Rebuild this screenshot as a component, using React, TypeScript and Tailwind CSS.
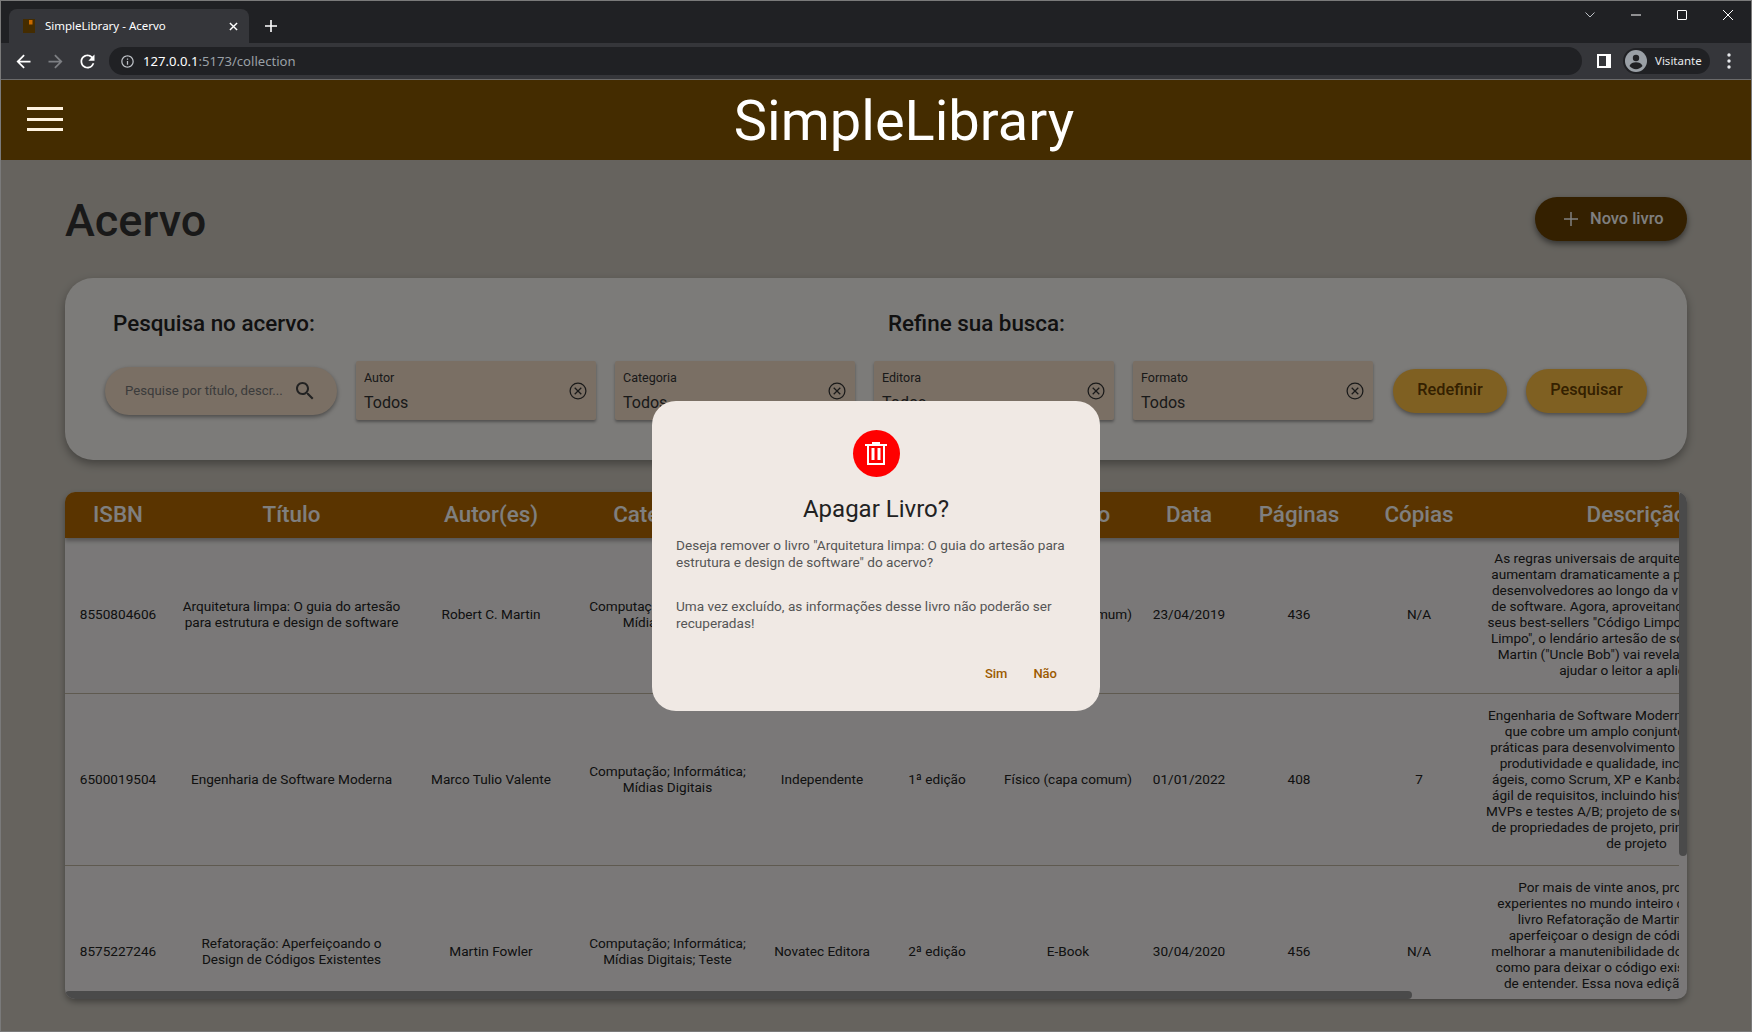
import React from "react";

const font = "[font-family:Roboto,'Liberation_Sans',sans-serif]";

function Clear() {
  return (
    <svg viewBox="0 0 18 18" className="w-[18px] h-[18px] fill-none stroke-[#333] stroke-[1.25] shrink-0">
      <circle cx="9" cy="9" r="7.900" />
      <path d="M5.700 5.700l6.600 6.600M12.300 5.700l-6.600 6.600" />
    </svg>
  );
}

function Field({ label }: { label: string }) {
  return (
    <div className="w-[240px] h-[59px] bg-[#f4dec8] rounded-[2px] shadow-[0_2px_3px_rgba(0,0,0,0.35)] flex items-center justify-between pl-2 pr-[9px] shrink-0">
      <div className="flex flex-col pt-[3px]">
        <span className="text-[12.5px] leading-[14px] text-[#333]">{label}</span>
        <span className="text-[16px] leading-[20px] mt-[8px] text-[#333]">Todos</span>
      </div>
      <Clear />
    </div>
  );
}

function Pill({ text, w }: { text: string; w: string }) {
  return (
    <button className={`${w} h-[44px] rounded-[22px] bg-[#ffc044] text-[#684000] text-[16.3px] font-medium shadow-[0_2px_4px_rgba(0,0,0,0.4)] shrink-0`}>
      {text}
    </button>
  );
}

const heads = ["ISBN", "Título", "Autor(es)", "Categorias", "Editora", "Edição", "Formato", "Data", "Páginas", "Cópias", "Descrição", "Ações"];
const widths = ["w-[106px]", "w-[241px]", "w-[158px]", "w-[195px]", "w-[114px]", "w-[116px]", "w-[146px]", "w-[96px]", "w-[124px]", "w-[116px]", "w-[319px]", "w-[205px]"];

type Row = { h: string; pb: string; c: React.ReactNode[]; d: string[] };
const rows: Row[] = [
  {
    h: "h-[155px]",
    pb: "pb-[2px]",
    c: ["8550804606", "Arquitetura limpa: O guia do artesão para estrutura e design de software", "Robert C. Martin", "Computação; Informática; Mídias Digitais", "Alta Books", "1ª edição", "Físico (capa comum)", "23/04/2019", "436", "N/A"],
    d: [
      "As regras universais de arquitetura de software",
      "aumentam dramaticamente a produtividade dos",
      "desenvolvedores ao longo da vida dos sistemas",
      "de software. Agora, aproveitando o sucesso dos",
      "seus best-sellers \"Código Limpo\" e \"O Codificador",
      "Limpo\", o lendário artesão de software Robert C.",
      "Martin (\"Uncle Bob\") vai revelar essas regras e",
      "ajudar o leitor a aplicá-las",
    ],
  },
  {
    h: "h-[172px]",
    pb: "pb-0",
    c: ["6500019504", "Engenharia de Software Moderna", "Marco Tulio Valente", "Computação; Informática; Mídias Digitais", "Independente", "1ª edição", "Físico (capa comum)", "01/01/2022", "408", "7"],
    d: [
      "Engenharia de Software Moderna é um livro texto",
      "que cobre um amplo conjunto de técnicas e",
      "práticas para desenvolvimento de software, com",
      "produtividade e qualidade, incluindo métodos",
      "ágeis, como Scrum, XP e Kanban; especificação",
      "ágil de requisitos, incluindo histórias de usuário,",
      "MVPs e testes A/B; projeto de software, com foco",
      "de propriedades de projeto, princípios e padrões",
      "de projeto",
    ],
  },
  {
    h: "h-[174px]",
    pb: "pb-[2px]",
    c: ["8575227246", "Refatoração: Aperfeiçoando o Design de Códigos Existentes", "Martin Fowler", "Computação; Informática; Mídias Digitais; Teste", "Novatec Editora", "2ª edição", "E-Book", "30/04/2020", "456", "N/A"],
    d: [
      "Por mais de vinte anos, programadores",
      "experientes no mundo inteiro contaram com o",
      "livro Refatoração de Martin Fowler para",
      "aperfeiçoar o design de código existente e",
      "melhorar a manutenibilidade do software, assim",
      "como para deixar o código existente mais fácil",
      "de entender. Essa nova edição, amplamente",
      "atualizada, explica a refatoração",
      "de maneira prática",
    ],
  },
];

function BrowserChrome() {
  return (
    <div className="shrink-0 h-[79px] flex flex-col [font-family:'Noto_Sans',sans-serif]">
      <div className="h-[42px] bg-[#202124] flex items-end pl-[8px] relative">
        <div className="w-[240px] h-[34px] bg-[#35363a] rounded-t-[8px] flex items-center pl-[14px] pr-[11px]">
          <svg viewBox="0 0 12 14" className="w-[12px] h-[14px] shrink-0">
            <rect width="12" height="14" fill="#442c00" />
            <rect x="6" y="1" width="3.500" height="4.500" fill="#c86a00" />
          </svg>
          <span className="ml-[10px] text-[11.5px] text-white flex-1 whitespace-nowrap">SimpleLibrary - Acervo</span>
          <svg viewBox="0 0 10 10" className="w-[9px] h-[9px] stroke-white stroke-[1.6]">
            <path d="M1 1l8 8M9 1l-8 8" />
          </svg>
        </div>
        <svg viewBox="0 0 12 12" className="w-[12px] h-[12px] stroke-white stroke-[1.6] ml-[16px] mb-[11px]">
          <path d="M6 0v12M0 6h12" />
        </svg>
        <div className="flex-1" />
        <div className="flex items-center gap-[36px] self-start mt-[9px] pr-[18px]">
          <svg viewBox="0 0 10 6" className="w-[10px] h-[6px] fill-none stroke-[#bdc1c6] stroke-1">
            <path d="M0.500 0.500L5 5l4.500-4.500" />
          </svg>
          <svg viewBox="0 0 10 10" className="w-[10px] h-[10px] stroke-white stroke-1">
            <path d="M0 5h10" />
          </svg>
          <div className="w-[10px] h-[10px] border border-white rounded-[1px]" />
          <svg viewBox="0 0 10 10" className="w-[10px] h-[10px] stroke-white stroke-1">
            <path d="M0 0l10 10M10 0L0 10" />
          </svg>
        </div>
      </div>
      <div className="flex-1 bg-[#35363a] flex items-center pl-[12px] pr-[17px] border-b border-[#6a6a6a]">
        <svg viewBox="0 0 24 24" className="w-[21px] h-[21px] fill-white shrink-0">
          <path d="M20 11H7.830l5.590-5.590L12 4l-8 8 8 8 1.410-1.410L7.830 13H20v-2z" />
        </svg>
        <svg viewBox="0 0 24 24" className="w-[21px] h-[21px] fill-[#7d7f83] shrink-0 ml-[11px]">
          <path d="M12 4l-1.410 1.410L16.170 11H4v2h12.170l-5.580 5.590L12 20l8-8z" />
        </svg>
        <svg viewBox="0 0 24 24" className="w-[21px] h-[21px] fill-white shrink-0 ml-[11px]">
          <path d="M17.650 6.350A7.958 7.958 0 0 0 12 4c-4.420 0-7.990 3.580-7.990 8s3.570 8 7.990 8c3.730 0 6.840-2.550 7.730-6h-2.080A5.990 5.990 0 0 1 12 18c-3.310 0-6-2.690-6-6s2.690-6 6-6c1.660 0 3.140.69 4.220 1.780L13 11h7V4l-2.350 2.350z" />
        </svg>
        <div className="ml-[11px] w-[1473px] h-[28px] rounded-full bg-[#202124] flex items-center pl-[11px] shrink-0">
          <svg viewBox="0 0 24 24" className="w-[15px] h-[15px] fill-[#bdc1c6] shrink-0">
            <path d="M11 7h2v2h-2zm0 4h2v6h-2zm1-9C6.480 2 2 6.480 2 12s4.480 10 10 10 10-4.480 10-10S17.520 2 12 2zm0 18c-4.410 0-8-3.590-8-8s3.590-8 8-8 8 3.590 8 8-3.590 8-8 8z" />
          </svg>
          <span className="ml-[8px] pt-[1px] text-[13.1px] text-white whitespace-nowrap">
            127.0.0.1<span className="text-[#9aa0a6]">:5173/collection</span>
          </span>
        </div>
        <div className="ml-[15px] w-[14px] h-[14px] bg-white flex items-center pl-[2px] shrink-0">
          <div className="w-[7px] h-[10px] bg-[#35363a]" />
        </div>
        <div className="ml-[12px] w-[87px] h-[26px] rounded-full bg-[#202124] flex items-center pl-[2px] shrink-0">
          <svg viewBox="0 0 22 22" className="w-[22px] h-[22px] shrink-0">
            <circle cx="11" cy="11" r="11" fill="#9aa0a6" />
            <circle cx="11" cy="8" r="3.200" fill="#202124" />
            <path d="M4.500 16c1-2.800 3.600-3.800 6.500-3.800s5.500 1 6.500 3.800c-1.600 2-4 3.200-6.500 3.200s-4.900-1.200-6.500-3.200z" fill="#202124" />
          </svg>
          <span className="ml-[8px] text-[11.5px] text-[#e8eaed] whitespace-nowrap">Visitante</span>
        </div>
        <svg viewBox="0 0 4 16" className="ml-[17px] w-[4px] h-[16px] fill-[#e8eaed] shrink-0">
          <circle cx="2" cy="2" r="1.700" />
          <circle cx="2" cy="8" r="1.700" />
          <circle cx="2" cy="14" r="1.700" />
        </svg>
      </div>
    </div>
  );
}

export default function App() {
  return (
    <div className={`w-[1752px] h-[1032px] overflow-hidden flex flex-col bg-[#ccc7bd] border border-[#7a7a7a] ${font} relative`}>
      <div className="relative z-20 shrink-0">
        <BrowserChrome />
        <header className="h-[80px] bg-[#442c00] flex items-center justify-center relative pl-[56px] pt-[2px]">
          <div className="absolute left-[26px] top-[27px] w-[36px] h-[24px] flex flex-col justify-between">
            <div className="h-[3px] bg-[#fff3e0]" />
            <div className="h-[3px] bg-[#fff3e0]" />
            <div className="h-[3px] bg-[#fff3e0]" />
          </div>
          <h1 className="text-[56px] leading-[66px] text-white">SimpleLibrary</h1>
        </header>
      </div>

      <main className="flex-1 min-h-0 pl-[64px] pr-[64px] pt-[37px] flex flex-col">
        <div className="flex items-center justify-between h-[44px]">
          <h2 className="text-[45px] leading-[52px] font-medium text-[#333] mt-[3px]">Acervo</h2>
          <button className="w-[152px] h-[44px] rounded-[22px] bg-[#684000] text-white font-medium text-[16.4px] flex items-center pl-[29px] shadow-[0_3px_6px_rgba(0,0,0,0.5)]">
            <svg viewBox="0 0 14 14" className="w-[14px] h-[14px] stroke-white stroke-[1.5] mr-[12px]">
              <path d="M7 0v14M0 7h14" />
            </svg>
            Novo livro
          </button>
        </div>

        <section className="mt-[37px] h-[182px] rounded-[28px] bg-[#f8f6f2] shadow-[0_4px_10px_rgba(0,0,0,0.35)] pl-[40px] pt-[32px] shrink-0">
          <div className="flex text-[22.4px] leading-[26px] font-medium text-[#222] pl-[8px]">
            <span className="w-[775px]">Pesquisa no acervo:</span>
            <span>Refine sua busca:</span>
          </div>
          <div className="flex items-center mt-[25px]">
            <div className="w-[232px] h-[48px] rounded-full bg-[#f4dec8] shadow-[0_2px_4px_rgba(0,0,0,0.4)] flex items-center pl-[20px] pr-[20px] shrink-0 mr-[19px]">
              <span className="flex-1 pt-[1px] text-[13.2px] text-[#777] whitespace-nowrap overflow-hidden">Pesquise por título, descr...</span>
              <svg viewBox="0 0 24 24" className="w-[24px] h-[24px] fill-[#444] shrink-0">
                <path d="M15.500 14h-.79l-.28-.27C15.410 12.590 16 11.110 16 9.500 16 5.910 13.090 3 9.500 3S3 5.910 3 9.500 5.910 16 9.500 16c1.610 0 3.090-.59 4.230-1.570l.27.28v.79l5 4.990L20.490 19l-4.990-5zm-6 0C7.010 14 5 11.990 5 9.500S7.010 5 9.500 5 14 7.010 14 9.500 11.990 14 9.500 14z" />
              </svg>
            </div>
            <div className="flex gap-[19px]">
              <Field label="Autor" />
              <Field label="Categoria" />
              <Field label="Editora" />
              <Field label="Formato" />
            </div>
            <div className="flex gap-[19px] ml-[20px]">
              <Pill text="Redefinir" w="w-[114px]" />
              <Pill text="Pesquisar" w="w-[121px]" />
            </div>
          </div>
        </section>

        <section className="mt-[32px] h-[507px] rounded-[10px] overflow-hidden bg-[#f4f1f0] shadow-[0_3px_6px_rgba(0,0,0,0.35)] relative shrink-0">
          <div className="w-[1614px] h-[499px] overflow-hidden">
            <table className="table-fixed w-[1936px] border-collapse text-[13.6px] leading-[16px] text-[#222]">
              <thead>
                <tr className="h-[46px] bg-[#b46800] text-white shadow-[0_3px_4px_rgba(0,0,0,0.3)]">
                  {heads.map((h, i) => (
                    <th key={h} className={`${widths[i]} pb-[2px] text-[22.4px] font-medium text-center whitespace-nowrap`}>{h}</th>
                  ))}
                </tr>
              </thead>
              <tbody>
                {rows.map((r, ri) => (
                  <tr key={ri} className={`${r.h} border-b border-[#bfb5a0]`}>
                    {r.c.map((c, i) => (
                      <td key={i} className={`text-center align-middle ${r.pb} ${i === 1 ? "px-[10px]" : "px-[6px]"}`}>{c}</td>
                    ))}
                    <td className={`text-center align-middle px-[2px] whitespace-nowrap ${r.pb}`}>
                      {r.d.map((l, i) => (
                        <div key={i}>{l}</div>
                      ))}
                    </td>
                    <td />
                  </tr>
                ))}
              </tbody>
            </table>
          </div>
          <div className="absolute right-0 top-0 w-[8px] h-[364px] rounded-[4px] bg-[#949494]" />
          <div className="absolute left-0 bottom-0 w-[1347px] h-[8px] rounded-[4px] bg-[#949494]" />
        </section>
      </main>

      <div className="fixed left-[1px] right-[1px] bottom-[1px] top-[80px] z-10 bg-black/50 flex items-center justify-center">
        <div className="w-[448px] h-[310px] rounded-[24px] bg-[#f0e9e4] pt-[29px] px-[24px] flex flex-col">
          <div className="self-center w-[47px] h-[47px] rounded-full bg-[#ff0000] flex items-center justify-center">
            <svg viewBox="0 0 22 23" className="w-[22px] h-[23px] fill-white">
              <path d="M7 0h8v2h7v2h-2v19H2V4H0V2h7zM4 4v17h14V4z" fillRule="evenodd" />
              <rect x="6.500" y="6" width="3" height="12" />
              <rect x="12.500" y="6" width="3" height="12" />
            </svg>
          </div>
          <h3 className="text-center text-[24px] leading-[30px] text-[#222] mt-[17px]">Apagar Livro?</h3>
          <div className="mt-[13px] text-[13.6px] leading-[17.3px] text-[#555]">
            <p>Deseja remover o livro "Arquitetura limpa: O guia do artesão para estrutura e design de software" do acervo?</p>
            <p className="mt-[27px]">Uma vez excluído, as informações desse livro não poderão ser recuperadas!</p>
          </div>
          <div className="mt-[31px] flex justify-end gap-[26px] pr-[19px] text-[13px] font-medium text-[#9c5a00]">
            <span>Sim</span>
            <span>Não</span>
          </div>
        </div>
      </div>
    </div>
  );
}
